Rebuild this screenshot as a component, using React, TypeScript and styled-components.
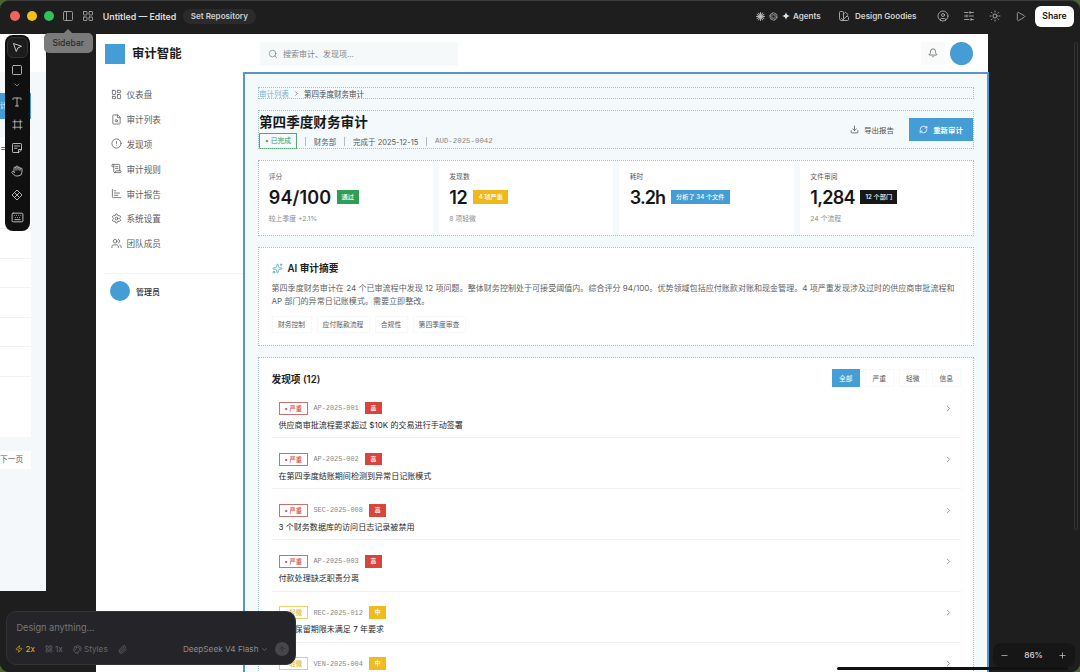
import React from 'react';
import styled, { createGlobalStyle, css } from 'styled-components';
import {
  PanelLeft, LayoutGrid, SwatchBook, CircleUser, Sun, Play, Square, ChevronDown, Type, Frame,
  Hand, Keyboard, LayoutDashboard, FileSearch, CircleAlert, ScrollText,
  ChartBar, Settings, Users, Search, Bell, Download, RefreshCw, ChevronRight, Sparkles, Zap,
  Palette, Paperclip, ArrowUp, Minus, Plus, SlidersHorizontal,
} from 'lucide-react';

const sans = `Inter, "Noto Sans CJK SC", sans-serif`;
const mono = `"Liberation Mono", monospace`;
const blue = '#459dd5';

const GlobalStyle = createGlobalStyle`
  * { box-sizing: border-box; }
  body { margin: 0; background: #4c6332; font-family: ${sans}; overflow: hidden; }
  svg { display: block; flex: none; }
`;

/* ---------- window ---------- */
const Window = styled.div`
  width: 1080px;
  height: 672px;
  display: flex;
  flex-direction: column;
  background: #1e1e1e;
  border-top: 1px solid #3c3c3c;
  border-radius: 9px;
  overflow: hidden;
`;
const TitleBar = styled.header`
  height: 33px;
  flex: none;
  display: flex;
  align-items: center;
  padding: 0 6px 3px 10px;
  color: #d2d2d2;
  font-size: 8.6px;
  font-weight: 600;
  white-space: nowrap;
`;
const Light = styled.span<{ $c: string }>`
  width: 10.4px;
  height: 10.4px;
  margin-right: 6.4px;
  border-radius: 50%;
  background: ${p => p.$c};
`;
const TitleIcon = styled.span<{ $gap: number; $lead?: number }>`
  display: flex;
  margin-left: ${p => p.$lead ?? 0}px;
  margin-right: ${p => p.$gap}px;
  color: #b4b4b4;
`;
const DocName = styled.span`
  width: 80px;
  color: #dcdcdc;
  font-size: 8.8px;
`;
const RepoButton = styled.button`
  height: 15px;
  width: 73px;
  padding: 0;
  border: 0;
  border-radius: 8px;
  background: #2b2b2b;
  color: #cfcfcf;
  font: 600 8.1px ${sans};
`;
const Spacer = styled.span`flex: 1;`;
const TitleLabel = styled.span<{ $w: number }>`
  width: ${p => p.$w}px;
  font-size: 8.1px;
`;
const ShareButton = styled.button`
  width: 39px;
  height: 21px;
  padding: 0;
  border: 0;
  border-radius: 6px;
  background: #fff;
  color: #151515;
  font: 600 8.7px ${sans};
`;
const Canvas = styled.main`
  position: relative;
  flex: 1;
  overflow: hidden;
  background: #1e1e1e;
`;

/* ---------- artboards on the canvas ---------- */
const PeekBoard = styled.section`
  position: absolute;
  left: 0;
  top: 0;
  width: 46px;
  height: 557px;
  padding-top: 39px;
  background: linear-gradient(#fff 0 38px, #f4f8fb 38px);
`;
const PeekButton = styled.div`
  width: 31px;
  height: 26px;
  margin: 20px 0 18px;
  background: ${blue};
  color: #fff;
  font-size: 7px;
  line-height: 26px;
`;
const PeekTable = styled.div`
  width: 31px;
  height: 300px;
  background: #fff;
  color: #444;
`;
const PeekHead = styled.div`
  height: 91px;
  padding-top: 3px;
  font-size: 10px;
  line-height: 14px;
`;
const PeekRow = styled.div`
  height: 29.6px;
  border-top: 1px solid #f0f1f2;
`;
const PeekNext = styled.div`
  width: 31px;
  height: 18px;
  margin-top: 13.5px;
  background: #fff;
  color: #5c5c5c;
  font-size: 7.7px;
  line-height: 18px;
`;

const Board = styled.section`
  position: absolute;
  left: 96px;
  top: 0;
  width: 893px;
  height: 700px;
  display: flex;
  flex-direction: column;
`;
const AppTop = styled.div`
  width: 892px;
  height: 38px;
  flex: none;
  display: flex;
  align-items: center;
  padding: 1px 15px 0 9.4px;
  background: #fff;
`;
const Logo = styled.span`
  width: 20px;
  height: 20px;
  background: ${blue};
`;
const Brand = styled.span`
  width: 128px;
  margin-left: 6.6px;
  color: #1c1c1c;
  font-size: 12.4px;
  font-weight: 600;
  line-height: 20px;
  padding-top: 1.5px;
`;
const SearchBox = styled.div`
  width: 198px;
  height: 24px;
  display: flex;
  align-items: center;
  gap: 5px;
  padding-left: 8px;
  background: #f6f9fa;
  color: #7e8487;
  font-size: 8px;
`;
const BellBox = styled.span`
  width: 24px;
  height: 23px;
  display: flex;
  align-items: center;
  justify-content: center;
  margin-right: 5px;
  padding-bottom: 2px;
  background: #f9fafa;
  color: #555;
`;
const Avatar = styled.span<{ $s: number }>`
  width: ${p => p.$s}px;
  height: ${p => p.$s}px;
  border-radius: 50%;
  background: ${blue};
`;
const Body = styled.div`
  flex: 1;
  display: flex;
  min-height: 0;
`;
const SideNav = styled.nav`
  width: 147px;
  flex: none;
  padding-top: 10px;
  background: #fff;
`;
const NavItem = styled.div`
  height: 24.8px;
  display: flex;
  align-items: center;
  gap: 5px;
  padding-left: 14.5px;
  color: #5d5d5d;
  font-size: 8.6px;
`;
const Account = styled.div`
  height: 36px;
  display: flex;
  align-items: center;
  gap: 6px;
  margin: 17.2px 0 0 7px;
  padding-left: 7px;
  border-top: 1px solid #f3f4f5;
  color: #2c2c2c;
  font-size: 8px;
  font-weight: 500;
`;

/* ---------- selected frame ---------- */
const Selected = styled.div`
  width: 746px;
  display: flex;
  flex-direction: column;
  gap: 11px;
  padding: 13px;
  border: 2px solid #5794cd;
  background: #f4f9fb;
`;
const Outlined = css`
  outline: 1px dotted #9cc4cd;
  outline-offset: -1px;
  flex: none;
`;
const Crumbs = styled.div`
  ${Outlined}
  height: 12px;
  display: flex;
  align-items: center;
  gap: 4px;
  padding: 1px 0 0 1px;
  color: #4d4d4d;
  font-size: 7.5px;
  span:first-child { color: #7bb5cf; }
`;
const Header = styled.div`
  ${Outlined}
  height: 39px;
  display: flex;
  align-items: center;
`;
const HeaderText = styled.div`
  flex: 1;
  height: 39px;
  padding-left: 1px;
`;
const PageTitle = styled.h1`
  margin: 0;
  height: 23px;
  color: #191919;
  font-size: 13.6px;
  font-weight: 600;
  line-height: 24px;
`;
const Meta = styled.div`
  height: 16px;
  display: flex;
  align-items: center;
  color: #5b5b5b;
  font-size: 7.5px;
`;
const DoneTag = styled.span`
  width: 38px;
  height: 16px;
  border: 1px solid #52ab70;
  color: #35a05b;
  font-size: 6.8px;
  line-height: 14px;
  text-align: center;
`;
const Bar = styled.i`
  width: 1px;
  height: 9px;
  margin: 0 7.9px;
  background: #b5bcc0;
`;
const Code = styled.span<{ $s: number }>`
  color: #858585;
  font-family: ${mono};
  font-size: ${p => p.$s}px;
`;
const ActionButton = styled.span<{ $primary?: boolean }>`
  width: 64px;
  height: 23px;
  display: flex;
  align-items: center;
  justify-content: center;
  gap: 5px;
  margin-left: ${p => (p.$primary ? 5 : 0)}px;
  margin-right: ${p => (p.$primary ? 1 : 0)}px;
  background: ${p => (p.$primary ? blue : 'transparent')};
  color: ${p => (p.$primary ? '#fff' : '#4f4f4f')};
  font-size: 7.4px;
  font-weight: ${p => (p.$primary ? 600 : 400)};
`;
const Stats = styled.div`
  position: relative;
  flex: none;
  height: 76px;
  display: grid;
  grid-template-columns: repeat(4, 1fr);
  gap: 6px;
  &::after {
    content: '';
    position: absolute;
    inset: 0;
    border: 1px dotted #9cc4cd;
  }
`;
const StatCard = styled.div`
  padding: 9px 10.8px 0;
  background: #fff;
  color: #5a5a5a;
  font-size: 6.8px;
  line-height: 15px;
`;
const StatRow = styled.div`
  height: 26px;
  display: flex;
  align-items: center;
`;
const StatValue = styled.b<{ $w: number; $tight?: number }>`
  width: ${p => p.$w}px;
  color: #161616;
  font-size: 18px;
  font-weight: 600;
  letter-spacing: ${p => -(p.$tight ?? 0)}px;
`;
const Chip = styled.span<{ $bg: string; $w: number }>`
  width: ${p => p.$w}px;
  height: 14px;
  background: ${p => p.$bg};
  color: #fff;
  font-size: 6.2px;
  font-weight: 500;
  line-height: 14px;
  text-align: center;
`;
const StatNote = styled.div`
  color: #8b8b8b;
  font-size: 6.8px;
  line-height: 17px;
`;
const Summary = styled.div`
  ${Outlined}
  height: 99px;
  padding: 13px 13.5px 0;
  background: #fff;
`;
const SectionTitle = styled.h2`
  margin: 0;
  height: 16px;
  display: flex;
  align-items: center;
  gap: 5px;
  color: #222;
  font-size: 9.7px;
  font-weight: 600;
  svg { color: #4fa9ad; }
`;
const Paragraph = styled.p`
  margin: 6px 0 0;
  color: #5f5f5f;
  font-size: 8.05px;
  line-height: 13px;
  white-space: nowrap;
`;
const Topics = styled.div`
  display: flex;
  gap: 5px;
  margin-top: 8px;
`;
const Topic = styled.span<{ $w: number }>`
  width: ${p => p.$w}px;
  height: 17px;
  border: 1px solid #f7f8f9;
  color: #5b5b5b;
  font-size: 6.8px;
  line-height: 15px;
  text-align: center;
`;
const Findings = styled.div`
  ${Outlined}
  height: 360px;
  padding: 12px 13.5px 0;
  background: #fff;
`;
const FindingsHead = styled.div`
  height: 18px;
  display: flex;
  align-items: center;
  justify-content: space-between;
  h2 { padding-top: 2px; }
`;
const Filters = styled.div`
  display: flex;
  gap: 5px;
`;
const Filter = styled.span<{ $on?: boolean }>`
  width: 28.5px;
  height: 18px;
  border: 1px solid ${p => (p.$on ? blue : '#f7f8f9')};
  background: ${p => (p.$on ? blue : '#fff')};
  color: ${p => (p.$on ? '#fff' : '#555')};
  font-size: 6.8px;
  line-height: 17px;
  text-align: center;
`;
const Finding = styled.div`
  height: 51.15px;
  display: flex;
  padding: 14.5px 7.5px 0 7px;
  border-bottom: 1px solid #eff1f2;
  > svg { margin-top: 2px; }
`;
const FindingMain = styled.div`flex: 1;`;
const TagRow = styled.div`
  height: 13px;
  display: flex;
  align-items: center;
  gap: 5.5px;
`;
const Severity = styled.span<{ $c: string; $t: string }>`
  width: 29.5px;
  height: 13px;
  border: 1px solid ${p => p.$c};
  color: ${p => p.$t};
  font-size: 6.3px;
  font-weight: 500;
  line-height: 12px;
  text-align: center;
`;
const Level = styled.span<{ $c: string }>`
  width: 16.5px;
  height: 12.5px;
  margin-left: 1px;
  background: ${p => p.$c};
  color: #fff;
  font-size: 5.8px;
  font-weight: 600;
  line-height: 12.5px;
  text-align: center;
`;
const FindingTitle = styled.div`
  margin-top: 3.4px;
  color: #272727;
  font-size: 8.05px;
  line-height: 14px;
`;

/* ---------- floating chrome ---------- */
const Tools = styled.aside`
  position: absolute;
  left: 4.6px;
  top: 0.6px;
  width: 25.5px;
  height: 196px;
  border-radius: 8px;
  background: #101010;
  color: #c9c9c9;
  display: flex;
  flex-direction: column;
  align-items: center;
`;
const Tool = styled.span<{ $h: number; $on?: boolean }>`
  width: 21px;
  height: ${p => p.$h}px;
  flex: none;
  display: flex;
  align-items: center;
  justify-content: center;
  ${p => p.$on && css`
    margin: 2px 0 0;
    border: 1px solid #333;
    border-radius: 6px;
    background: #1c1c1c;
  `}
`;
const Tip = styled.div`
  position: absolute;
  left: 44px;
  top: 32.5px;
  width: 48.5px;
  height: 20.5px;
  border-radius: 5px;
  background: #7a7a7a;
  color: #2a2a2a;
  font-size: 8.6px;
  font-weight: 500;
  line-height: 21px;
  text-align: center;
  z-index: 2;
  &::before {
    content: '';
    position: absolute;
    left: 20px;
    top: -4px;
    border: 4px solid transparent;
    border-top: 0;
    border-bottom-color: #7a7a7a;
  }
`;
const Prompt = styled.div`
  position: absolute;
  left: 6px;
  top: 577px;
  width: 289.5px;
  height: 54px;
  padding: 9px 6px 0 9.4px;
  border: 1px solid #333237;
  border-radius: 10px;
  background: #252429;
  color: #77767b;
`;
const PromptText = styled.div`
  height: 14px;
  font-size: 9.2px;
  line-height: 14px;
`;
const PromptRow = styled.div`
  height: 16px;
  display: flex;
  align-items: center;
  margin: 6px 0 0 -1px;
  font-size: 8.2px;
`;
const PromptItem = styled.span<{ $w: number; $hot?: boolean }>`
  width: ${p => p.$w}px;
  display: flex;
  align-items: center;
  gap: 2px;
  color: ${p => (p.$hot ? '#d9b520' : '#69686d')};
`;
const Model = styled.span`
  display: flex;
  align-items: center;
  gap: 2px;
  margin-right: 7px;
  color: #8c8b90;
`;
const Send = styled.span`
  width: 14px;
  height: 14px;
  border-radius: 50%;
  background: #47474b;
  color: #242428;
  display: flex;
  align-items: center;
  justify-content: center;
`;
const ZoomBar = styled.div`
  position: absolute;
  left: 993px;
  top: 609px;
  width: 82px;
  height: 24px;
  display: flex;
  align-items: center;
  justify-content: space-between;
  padding: 0 8px 0 7px;
  border-radius: 8px;
  background: #161616;
  color: #c4c4c4;
  font-size: 8.2px;
  font-weight: 600;
`;
const HScroll = styled.div`
  position: absolute;
  left: 837px;
  top: 632.5px;
  width: 231px;
  height: 3.5px;
  border-radius: 2px;
  background: #111;
`;
const VScroll = styled.div`
  position: absolute;
  left: 1074px;
  top: 8px;
  width: 4px;
  height: 488px;
  border: 1px solid #333;
  border-radius: 2px;
`;

const Claude = () => (
  <svg width="9" height="9" viewBox="0 0 18 18" stroke="#c8c8c8" strokeWidth="1.7" strokeLinecap="round">
    {[0, 30, 60, 90, 120, 150].map(a => <path key={a} d="M9 1V17" transform={`rotate(${a} 9 9)`} />)}
  </svg>
);
const Knot = () => (
  <svg width="9" height="9" viewBox="0 0 18 18" fill="none" stroke="#b8b8b8" strokeWidth="1.3">
    {[0, 60, 120, 180, 240, 300].map(a => (
      <path key={a} d="M6 9V4.6A3.2 3.2 0 0 1 11.4 2.4L15 4.5" transform={`rotate(${a} 9 9)`} />
    ))}
  </svg>
);
const Star = () => (
  <svg width="8" height="8" viewBox="0 0 16 16" fill="#e4e4e4">
    <path d="M8 0Q8.8 7.2 16 8Q8.8 8.8 8 16Q7.2 8.8 0 8Q7.2 7.2 8 0Z" />
  </svg>
);
const Cursor = () => (
  <svg width="11" height="11" viewBox="0 0 22 22" fill="none" stroke="#e0e0e0" strokeWidth="1.7" strokeLinejoin="round">
    <path d="M3 3L19 8.5L11.8 11.8L8.5 19Z" />
  </svg>
);
const Note = ({ size = 12 }: { size?: number }) => (
  <svg width={size} height={size} viewBox="0 0 24 24" fill="none" stroke="currentColor" strokeWidth="1.8" strokeLinejoin="round" strokeLinecap="round">
    <path d="M21 15V4.500Q21 3 19.500 3H4.500Q3 3 3 4.500V19.500Q3 21 4.500 21H15ZM15 21V15H21M7 8H17M7 12.500H12" />
  </svg>
);
const Diamonds = ({ size = 12 }: { size?: number }) => (
  <svg width={size} height={size} viewBox="0 0 24 24" fill="none" stroke="currentColor" strokeWidth="1.7" strokeLinejoin="round">
    <path d="M12 2L22 12L12 22L2 12ZM7 7L17 17M17 7L7 17" />
  </svg>
);

const nav: [React.ElementType, string][] = [
  [LayoutDashboard, '仪表盘'], [FileSearch, '审计列表'], [CircleAlert, '发现项'], [ScrollText, '审计规则'],
  [ChartBar, '审计报告'], [Settings, '系统设置'], [Users, '团队成员'],
];
const tools: [React.ElementType, number, number][] = [
  [Square, 24, 12], [ChevronDown, 6, 8], [Type, 28, 12], [Frame, 18, 11], [Note, 28, 12],
  [Hand, 19, 12], [Diamonds, 28, 12], [Keyboard, 18, 13],
];
const stats = [
  { label: '评分', value: '94/100', vw: 68, tight: -0.15, chip: '通过', bg: '#2f9e55', w: 22, note: '较上季度 +2.1%' },
  { label: '发现数', value: '12', vw: 24, tight: 0.3, chip: '4 项严重', bg: '#efb91d', w: 35, note: '8 项轻微' },
  { label: '耗时', value: '3.2h', vw: 41, tight: 0.9, chip: '分析了 34 个文件', bg: blue, w: 59, note: '' },
  { label: '文件审阅', value: '1,284', vw: 50, tight: 0.7, chip: '12 个部门', bg: '#171717', w: 37, note: '24 个流程' },
];
const findings = [
  { id: 'AP-2025-001', high: true, title: '供应商审批流程要求超过 $10K 的交易进行手动签署' },
  { id: 'AP-2025-002', high: true, title: '在第四季度结账期间检测到异常日记账模式' },
  { id: 'SEC-2025-008', high: true, title: '3 个财务数据库的访问日志记录被禁用' },
  { id: 'AP-2025-003', high: true, title: '付款处理缺乏职责分离' },
  { id: 'REC-2025-012', high: false, title: '文档保留期限未满足 7 年要求' },
  { id: 'VEN-2025-004', high: false, title: '' },
];

export default function App() {
  return (
    <>
      <GlobalStyle />
      <Window>
        <TitleBar>
          <Light $c="#f4625f" /><Light $c="#f5bd1a" /><Light $c="#2fc25b" />
          <TitleIcon $gap={8.5} $lead={1.5}><PanelLeft size={12} strokeWidth={1.6} /></TitleIcon>
          <TitleIcon $gap={8.5}><LayoutGrid size={12} strokeWidth={1.6} /></TitleIcon>
          <DocName>Untitled — Edited</DocName>
          <RepoButton>Set Repository</RepoButton>
          <Spacer />
          <TitleIcon $gap={4}><Claude /></TitleIcon>
          <TitleIcon $gap={4}><Knot /></TitleIcon>
          <TitleIcon $gap={3}><Star /></TitleIcon>
          <TitleLabel $w={45}>Agents</TitleLabel>
          <TitleIcon $gap={5}><SwatchBook size={12} strokeWidth={1.8} /></TitleIcon>
          <TitleLabel $w={82}>Design Goodies</TitleLabel>
          <TitleIcon $gap={14}><CircleUser size={12} strokeWidth={1.7} /></TitleIcon>
          <TitleIcon $gap={14}><SlidersHorizontal size={12} strokeWidth={1.7} /></TitleIcon>
          <TitleIcon $gap={14}><Sun size={12} strokeWidth={1.7} /></TitleIcon>
          <TitleIcon $gap={9}><Play size={11} strokeWidth={1.7} /></TitleIcon>
          <ShareButton>Share</ShareButton>
        </TitleBar>
        <Canvas>
          <PeekBoard>
            <PeekButton>计</PeekButton>
            <PeekTable>
              <PeekHead>=</PeekHead>
              {[0, 1, 2, 3, 4, 5].map(i => <PeekRow key={i} />)}
            </PeekTable>
            <PeekNext>下一页</PeekNext>
          </PeekBoard>

          <Board>
            <AppTop>
              <Logo />
              <Brand>审计智能</Brand>
              <SearchBox><Search size={10} strokeWidth={1.8} />搜索审计、发现项...</SearchBox>
              <Spacer />
              <BellBox><Bell size={10} strokeWidth={1.8} /></BellBox>
              <Avatar $s={23} />
            </AppTop>
            <Body>
              <SideNav>
                {nav.map(([Icon, label]) => (
                  <NavItem key={label}><Icon size={11} strokeWidth={1.7} />{label}</NavItem>
                ))}
                <Account><Avatar $s={20} />管理员</Account>
              </SideNav>
              <Selected>
                <Crumbs><span>审计列表</span><ChevronRight size={7} /><span>第四季度财务审计</span></Crumbs>
                <Header>
                  <HeaderText>
                    <PageTitle>第四季度财务审计</PageTitle>
                    <Meta>
                      <DoneTag>• 已完成</DoneTag><Bar />财务部<Bar />完成于 2025-12-15<Bar />
                      <Code $s={7.4}>AUD-2025-0042</Code>
                    </Meta>
                  </HeaderText>
                  <ActionButton><Download size={9} />导出报告</ActionButton>
                  <ActionButton $primary><RefreshCw size={9} />重新审计</ActionButton>
                </Header>
                <Stats>
                  {stats.map(s => (
                    <StatCard key={s.label}>
                      {s.label}
                      <StatRow>
                        <StatValue $w={s.vw} $tight={s.tight}>{s.value}</StatValue>
                        <Chip $bg={s.bg} $w={s.w}>{s.chip}</Chip>
                      </StatRow>
                      <StatNote>{s.note}</StatNote>
                    </StatCard>
                  ))}
                </Stats>
                <Summary>
                  <SectionTitle><Sparkles size={11} strokeWidth={1.8} />AI 审计摘要</SectionTitle>
                  <Paragraph>
                    第四季度财务审计在 24 个已审流程中发现 12 项问题。整体财务控制处于可接受阈值内。综合评分 94/100。优势领域包括应付账款对账和现金管理。4 项严重发现涉及过时的供应商审批流程和<br />
                    AP 部门的异常日记账模式。需要立即整改。
                  </Paragraph>
                  <Topics>
                    <Topic $w={40}>财务控制</Topic><Topic $w={53}>应付账款流程</Topic>
                    <Topic $w={33}>合规性</Topic><Topic $w={53}>第四季度审查</Topic>
                  </Topics>
                </Summary>
                <Findings>
                  <FindingsHead>
                    <SectionTitle>发现项 (12)</SectionTitle>
                    <Filters>
                      <Filter $on>全部</Filter><Filter>严重</Filter><Filter>轻微</Filter><Filter>信息</Filter>
                    </Filters>
                  </FindingsHead>
                  {findings.map(f => (
                    <Finding key={f.id}>
                      <FindingMain>
                        <TagRow>
                          <Severity $c={f.high ? '#c9716d' : '#e6cf6c'} $t={f.high ? '#d0453f' : '#dcb92c'}>
                            • {f.high ? '严重' : '轻微'}
                          </Severity>
                          <Code $s={6.85}>{f.id}</Code>
                          <Level $c={f.high ? '#d8453d' : '#efbb20'}>{f.high ? '高' : '中'}</Level>
                        </TagRow>
                        {f.title && <FindingTitle>{f.title}</FindingTitle>}
                      </FindingMain>
                      <ChevronRight size={9} color="#777" />
                    </Finding>
                  ))}
                </Findings>
              </Selected>
            </Body>
          </Board>

          <Tools>
            <Tool $h={21} $on><Cursor /></Tool>
            {tools.map(([Icon, h, s], i) => (
              <Tool key={i} $h={h}><Icon size={s} strokeWidth={1.7} /></Tool>
            ))}
          </Tools>
          <Prompt>
            <PromptText>Design anything...</PromptText>
            <PromptRow>
              <PromptItem $w={29.5} $hot><Zap size={8} />2x</PromptItem>
              <PromptItem $w={28}><LayoutGrid size={8} />1x</PromptItem>
              <PromptItem $w={45}><Palette size={9} />Styles</PromptItem>
              <PromptItem $w={12}><Paperclip size={9} /></PromptItem>
              <Spacer />
              <Model>DeepSeek V4 Flash<ChevronDown size={7} /></Model>
              <Send><ArrowUp size={8} /></Send>
            </PromptRow>
          </Prompt>
          <ZoomBar><Minus size={9} />86%<Plus size={9} /></ZoomBar>
          <HScroll />
          <VScroll />
        </Canvas>
      </Window>
      <Tip>Sidebar</Tip>
    </>
  );
}
